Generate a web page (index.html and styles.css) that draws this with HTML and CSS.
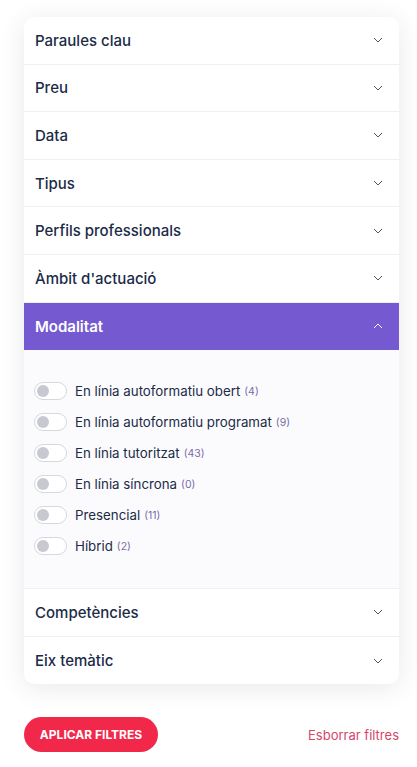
FILE: index.html
```html
<!DOCTYPE html>
<html lang="ca">

<head>
    <meta charset="UTF-8">
    <meta name="viewport" content="width=device-width, initial-scale=1.0">
    <title>Filtres</title>
    <link rel="stylesheet" href="styles.css">
</head>

<body>
    <main class="filters">
        <section class="filter-card">
            <div class="filter-item">
                <span>Paraules clau</span>
                <svg class="chevron" viewBox="0 0 10 6"><path d="M1 1l4 4 4-4" /></svg>
            </div>
            <div class="filter-item">
                <span>Preu</span>
                <svg class="chevron" viewBox="0 0 10 6"><path d="M1 1l4 4 4-4" /></svg>
            </div>
            <div class="filter-item">
                <span>Data</span>
                <svg class="chevron" viewBox="0 0 10 6"><path d="M1 1l4 4 4-4" /></svg>
            </div>
            <div class="filter-item">
                <span>Tipus</span>
                <svg class="chevron" viewBox="0 0 10 6"><path d="M1 1l4 4 4-4" /></svg>
            </div>
            <div class="filter-item">
                <span>Perfils professionals</span>
                <svg class="chevron" viewBox="0 0 10 6"><path d="M1 1l4 4 4-4" /></svg>
            </div>
            <div class="filter-item">
                <span>Àmbit d'actuació</span>
                <svg class="chevron" viewBox="0 0 10 6"><path d="M1 1l4 4 4-4" /></svg>
            </div>
            <div class="filter-item open">
                <span>Modalitat</span>
                <svg class="chevron" viewBox="0 0 10 6"><path d="M1 5l4-4 4 4" /></svg>
            </div>
            <div class="filter-body">
                <label class="option"><span class="switch"></span>En línia autoformatiu obert <span class="count">(4)</span></label>
                <label class="option"><span class="switch"></span>En línia autoformatiu programat <span class="count">(9)</span></label>
                <label class="option"><span class="switch"></span>En línia tutoritzat <span class="count">(43)</span></label>
                <label class="option"><span class="switch"></span>En línia síncrona <span class="count">(0)</span></label>
                <label class="option"><span class="switch"></span>Presencial <span class="count">(11)</span></label>
                <label class="option"><span class="switch"></span>Híbrid <span class="count">(2)</span></label>
            </div>
            <div class="filter-item">
                <span>Competències</span>
                <svg class="chevron" viewBox="0 0 10 6"><path d="M1 1l4 4 4-4" /></svg>
            </div>
            <div class="filter-item last">
                <span>Eix temàtic</span>
                <svg class="chevron" viewBox="0 0 10 6"><path d="M1 1l4 4 4-4" /></svg>
            </div>
        </section>

        <div class="actions">
            <button class="apply">APLICAR FILTRES</button>
            <a class="clear" href="#">Esborrar filtres</a>
        </div>
    </main>
</body>

</html>
```

FILE: styles.css
```css
* {
    box-sizing: border-box;
}

body {
    margin: 0px;
    padding: 0px;
    background: #ffffff;
    font-family: "Inter", "Noto Sans", sans-serif;
    color: #1b2b47;
}

.filters {
    padding: 17px 18px 0px 24px;
}

.filter-card {
    background: #ffffff;
    border-radius: 10px;
    box-shadow: 0px 4px 26px rgba(30, 40, 70, 0.1);
    overflow: hidden;
}

.filter-item {
    height: 47.6px;
    display: flex;
    align-items: center;
    justify-content: space-between;
    padding: 0px 16px 0px 11px;
    font-size: 15px;
    font-weight: 500;
    border-bottom: 1px solid #eef0f3;
}

.filter-item.last {
    border-bottom: none;
}

.filter-item.open {
    background: #7559d0;
    color: #ffffff;
    font-weight: 600;
    border-bottom: none;
}

.chevron {
    width: 10px;
    height: 6px;
    fill: none;
    stroke: #4a5568;
    stroke-width: 1;
}

.open .chevron {
    stroke: #ffffff;
}

.filter-body {
    background: #fbfbfe;
    padding: 32px 10px 33px 10px;
    display: flex;
    flex-direction: column;
    gap: 13px;
    border-bottom: 1px solid #eef0f3;
}

.option {
    display: flex;
    align-items: center;
    height: 18px;
    font-size: 13.3px;
    color: #1b2b47;
}

.switch {
    width: 33px;
    height: 18px;
    border: 1px solid #d6d8de;
    border-radius: 9px;
    background: #ffffff;
    margin-right: 8px;
    padding: 2px;
    display: flex;
    align-items: center;
}

.switch::before {
    content: "";
    width: 12px;
    height: 12px;
    border-radius: 50%;
    background: #c8c9d0;
}

.count {
    color: #7a6ba6;
    font-size: 10.5px;
    margin-left: 4px;
}

.actions {
    display: flex;
    justify-content: space-between;
    align-items: center;
    margin-top: 33px;
}

.apply {
    width: 134px;
    height: 35px;
    border: none;
    border-radius: 18px;
    background: #f2284b;
    color: #ffffff;
    font-family: "Inter", sans-serif;
    font-size: 12px;
    font-weight: 700;
}

.clear {
    color: #d5466b;
    font-size: 13px;
    text-decoration: none;
}
```
